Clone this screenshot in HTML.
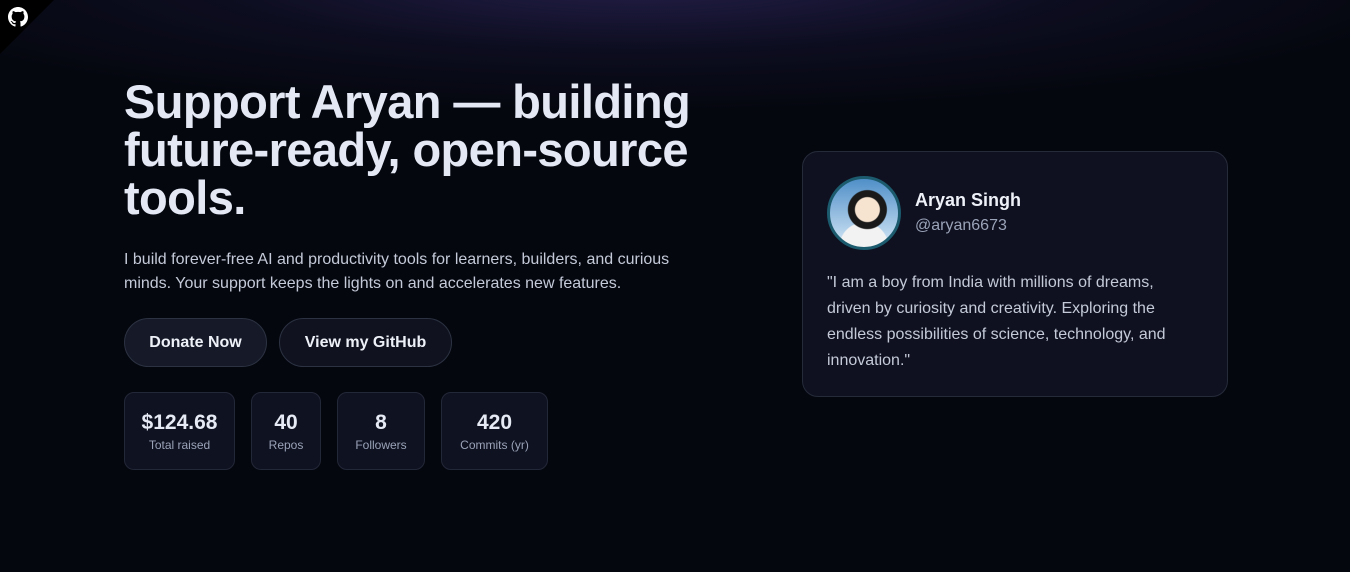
<!DOCTYPE html>
<html><head><meta charset="utf-8"><style>
*{margin:0;padding:0;box-sizing:border-box}
body{width:1350px;height:572px;overflow:hidden;font-family:"Liberation Sans",sans-serif;color:#e5e9f5;
background:radial-gradient(ellipse 800px 130px at 640px -20px,rgba(60,50,120,.55),rgba(35,30,80,.25) 55%,transparent 100%),#05070f;position:relative}
.corner{position:absolute;left:0;top:0;width:0;height:0;border-top:54px solid #000;border-right:54px solid transparent}
.gh{position:absolute;left:8px;top:7px}
h1{position:absolute;left:124px;top:78px;font-size:47px;line-height:48px;font-weight:bold;letter-spacing:-0.6px;color:#e3e8f4;width:640px}
p.lead{position:absolute;left:124px;top:248px;font-size:16px;line-height:24px;color:#c4cad8;width:595px}
.btn{position:absolute;top:318px;height:49px;border-radius:25px;border:1px solid #2c3242;background:#161a28;color:#eef1f8;font-weight:bold;font-size:16px;display:flex;align-items:center;justify-content:center}
.stat{position:absolute;top:392px;height:78px;border:1px solid #232838;border-radius:10px;background:#0f1220;text-align:center}
.stat b{display:block;font-size:21px;margin-top:18px;color:#e6eaf4}
.stat span{display:block;font-size:12px;color:#9aa3b8;margin-top:3px}
.card{position:absolute;left:802px;top:151px;width:426px;height:246px;border:1px solid #262b3a;border-radius:16px;background:#0f1120}
.av{position:absolute;left:24px;top:24px;width:74px;height:74px;border-radius:50%;border:3px solid #1c5a6e;background:radial-gradient(circle at 55% 45%,#f6e3d0 0 12px,#1a1a1a 13px 19px,transparent 20px),radial-gradient(circle at 50% 100%,#f2f2f2 0 24px,transparent 25px),linear-gradient(#4f8fc8,#d6e8f6);overflow:hidden}
.name{position:absolute;left:112px;top:38px;font-size:18px;font-weight:bold;color:#eef1f8}
.handle{position:absolute;left:112px;top:65px;font-size:16px;color:#9aa3b8}
.quote{position:absolute;left:24px;top:118px;width:368px;font-size:16px;line-height:26px;color:#c4cad8}
</style></head><body>
<div class="corner"></div>
<svg class="gh" width="20" height="20" viewBox="0 0 16 16"><path fill="#fff" d="M8 0C3.580 0 0 3.58 0 8c0 3.54 2.29 6.53 5.47 7.59.4.07.55-.17.55-.38 0-.19-.01-.82-.01-1.49-2.010.37-2.53-.49-2.69-.94-.09-.23-.48-.94-.82-1.130-.28-.15-.68-.52-.01-.53.63-.01 1.08.58 1.23.82.72 1.21 1.870.87 2.33.66.07-.52.28-.87.51-1.07-1.78-.2-3.64-.89-3.64-3.95 0-.87.31-1.59.82-2.15-.08-.2-.36-1.02.08-2.12 0 0 .67-.21 2.2.82.64-.18 1.32-.27 2-.27.68 0 1.36.09 2 .27 1.53-1.04 2.2-.82 2.2-.82.44 1.1.16 1.92.08 2.12.51.56.82 1.27.82 2.15 0 3.07-1.87 3.75-3.65 3.95.29.25.54.73.54 1.48 0 1.07-.01 1.93-.01 2.2 0 .21.15.46.55.38A8.013 8.013 0 0016 8c0-4.42-3.58-8-8-8z"/></svg>
<h1>Support Aryan — building future-ready, open-source tools.</h1>
<p class="lead">I build forever-free AI and productivity tools for learners, builders, and curious minds. Your support keeps the lights on and accelerates new features.</p>
<div class="btn" style="left:124px;width:143px">Donate Now</div>
<div class="btn" style="left:279px;width:173px;background:#10131f">View my GitHub</div>
<div class="stat" style="left:124px;width:111px"><b>$124.68</b><span>Total raised</span></div>
<div class="stat" style="left:251px;width:70px"><b>40</b><span>Repos</span></div>
<div class="stat" style="left:337px;width:88px"><b>8</b><span>Followers</span></div>
<div class="stat" style="left:441px;width:107px"><b>420</b><span>Commits (yr)</span></div>
<div class="card">
<div class="av"></div>
<div class="name">Aryan Singh</div>
<div class="handle">@aryan6673</div>
<div class="quote">"I am a boy from India with millions of dreams, driven by curiosity and creativity. Exploring the endless possibilities of science, technology, and innovation."</div>
</div>
</body></html>
